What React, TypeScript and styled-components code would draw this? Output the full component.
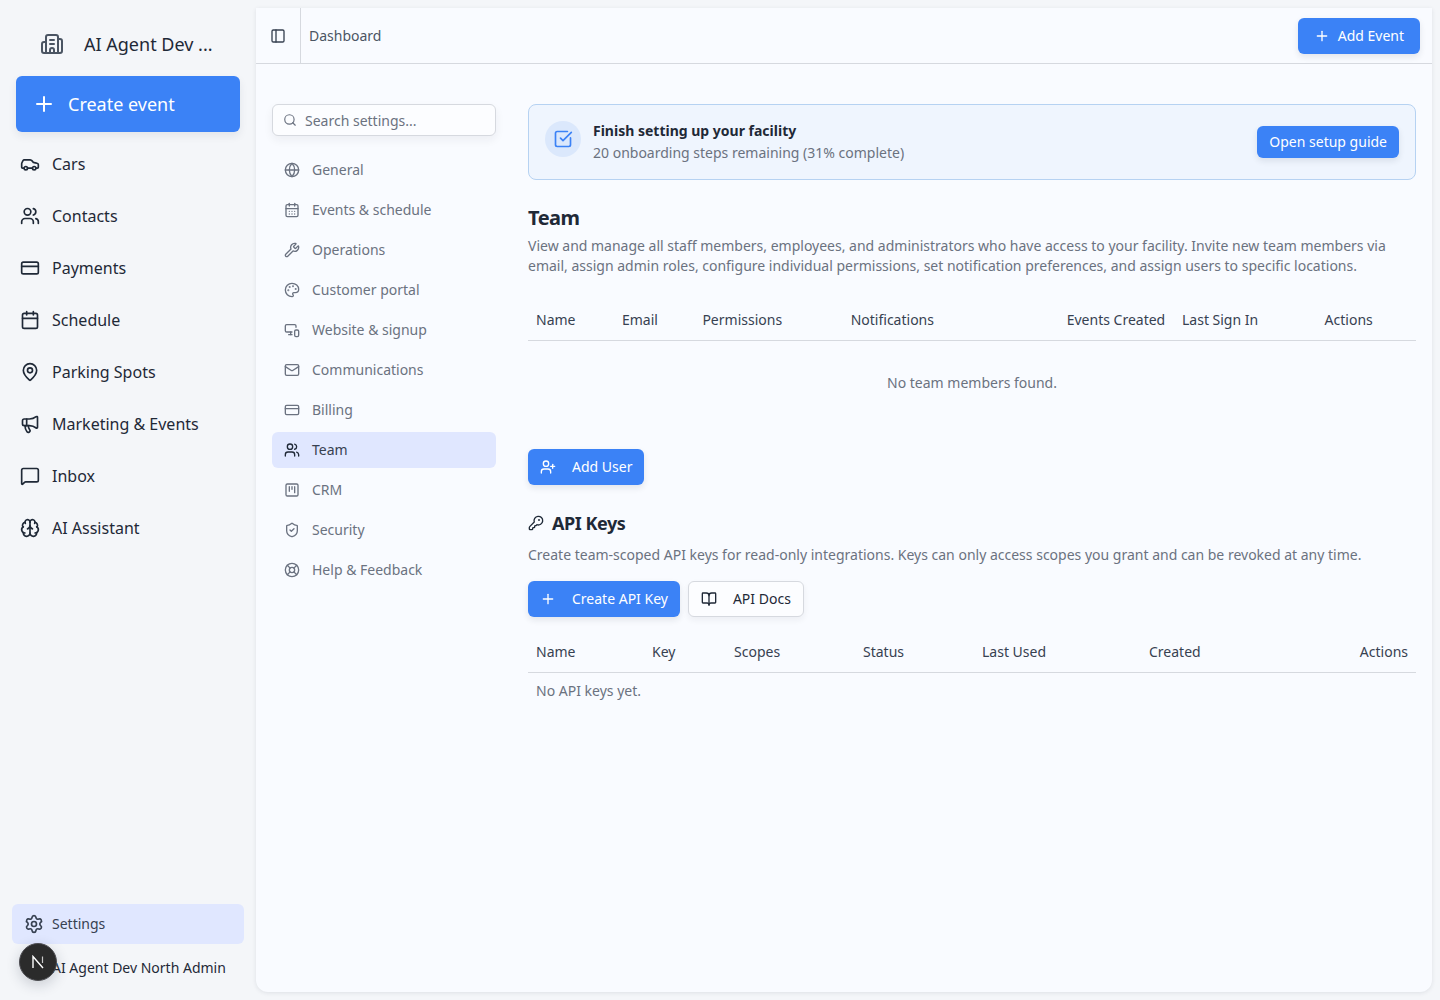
import React from "react";
import styled, { createGlobalStyle } from "styled-components";
import {
  Building2, Plus, Car, Users, CreditCard, Calendar, MapPin, Megaphone, MessageSquare, Brain,
  Settings, PanelLeft, Search, Globe, CalendarDays, Wrench, Palette, MonitorSmartphone, Mail,
  SquareKanban, ShieldCheck, LifeBuoy, SquareCheckBig, UserPlus, KeyRound, BookOpen,
} from "lucide-react";

const Global = createGlobalStyle`
  html, body { margin: 0; padding: 0; background: #f4f6f9; }
  body { font-family: "Noto Sans", "Open Sans", sans-serif; color: #1f2937; }
  * { box-sizing: border-box; }
`;

const Shell = styled.div`
  display: flex;
  width: 1440px;
  height: 1000px;
  overflow: hidden;
  background: #f4f6f9;
`;

const Sidebar = styled.aside`
  width: 256px;
  flex: none;
  display: flex;
  flex-direction: column;
  height: 100%;
`;

const Brand = styled.div`
  height: 76px;
  padding: 12px 0 0 40px;
  display: flex;
  align-items: center;
  gap: 20px;
  font-size: 18px;
  color: #1f2937;
  svg { color: #4b5563; }
`;

const CreateButton = styled.button`
  margin: 0 16px 6px;
  height: 56px;
  width: 224px;
  flex: none;
  border: 0;
  border-radius: 6px;
  background: #3b82f6;
  color: #fff;
  font: 400 18px "Noto Sans", sans-serif;
  display: flex;
  align-items: center;
  gap: 12px;
  padding: 0 16px;
  box-shadow: 0 4px 8px rgba(30, 41, 59, 0.08);
`;

const NavList = styled.nav`
  display: flex;
  flex-direction: column;
`;

const NavItem = styled.div`
  height: 52px;
  display: flex;
  align-items: center;
  gap: 12px;
  padding-left: 20px;
  font-size: 16px;
  color: #1f2937;
  svg { flex: none; }
`;

const SidebarFoot = styled.div`
  margin-top: auto;
  position: relative;
  padding: 0 12px 8px;
`;

const SettingsLink = styled.div`
  height: 40px;
  border-radius: 6px;
  background: #e0e7ff;
  display: flex;
  align-items: center;
  gap: 8px;
  padding-left: 12px;
  font-size: 14px;
  line-height: 20px;
  color: #374151;
`;

const UserName = styled.div`
  height: 48px;
  padding-left: 40px;
  display: flex;
  align-items: center;
  font-size: 14px;
  line-height: 20px;
  color: #1f2937;
  white-space: nowrap;
`;

const Avatar = styled.div`
  position: absolute;
  left: 19px;
  bottom: 19px;
  width: 38px;
  height: 38px;
  border-radius: 50%;
  background: #2b2b2b;
  border: 1.5px solid #4d4d52;
  display: flex;
  align-items: center;
  justify-content: center;
  box-shadow: 0 4px 14px rgba(30, 41, 59, 0.2);
`;

const Main = styled.main`
  width: 1176px;
  height: 984px;
  margin-top: 8px;
  flex: none;
  background: #f9fbff;
  border-radius: 0 0 12px 12px;
  box-shadow: 0 1px 4px rgba(30, 41, 59, 0.1);
  display: flex;
  flex-direction: column;
`;

const Header = styled.header`
  height: 56px;
  flex: none;
  border-bottom: 1px solid #d6d9df;
  display: flex;
  align-items: center;
`;

const Trigger = styled.div`
  width: 45px;
  height: 100%;
  border-right: 1px solid #d6d9df;
  display: flex;
  align-items: center;
  justify-content: center;
  color: #374151;
`;

const Crumb = styled.div`
  margin-left: 8px;
  font-size: 14px;
  color: #4b5563;
`;

const PrimaryButton = styled.button<{ $gap?: number; $px?: number }>`
  height: 36px;
  border: 0;
  border-radius: 6px;
  background: #3b82f6;
  color: #fff;
  font: 400 14px/20px "Noto Sans", sans-serif;
  display: inline-flex;
  align-items: center;
  gap: ${(p) => p.$gap ?? 16}px;
  padding: 0 ${(p) => p.$px ?? 12}px;
  box-shadow: 0 3px 6px rgba(30, 41, 59, 0.1);
  white-space: nowrap;
`;

const HeaderAction = styled(PrimaryButton)`
  margin-left: auto;
  margin-right: 12px;
  padding: 0 16px;
`;

const Body = styled.div`
  display: flex;
  padding: 40px 16px 0;
`;

const SettingsNav = styled.div`
  width: 224px;
  flex: none;
  display: flex;
  flex-direction: column;
  gap: 4px;
`;

const SearchBox = styled.div`
  height: 32px;
  margin-bottom: 12px;
  border: 1px solid #d6d9df;
  border-radius: 6px;
  background: #fcfdff;
  box-shadow: 0 4px 10px rgba(30, 41, 59, 0.06);
  display: flex;
  align-items: center;
  gap: 8px;
  padding-left: 10px;
  font-size: 14px;
  color: #6b7280;
  svg { color: #6b7280; }
`;

const SettingsItem = styled.div<{ $active?: boolean }>`
  height: 36px;
  border-radius: 6px;
  display: flex;
  align-items: center;
  gap: 12px;
  padding-left: 12px;
  font-size: 14px;
  line-height: 20px;
  color: ${(p) => (p.$active ? "#374151" : "#6b7280")};
  background: ${(p) => (p.$active ? "#e0e7ff" : "transparent")};
  svg { color: ${(p) => (p.$active ? "#1f2937" : "#6b7280")}; flex: none; }
`;

const Content = styled.div`
  width: 888px;
  margin-left: 32px;
  flex: none;
`;

const Banner = styled.div`
  height: 76px;
  border: 1px solid #b6d2f2;
  border-radius: 8px;
  background: #eff5fe;
  display: flex;
  align-items: center;
  padding: 0 16px;
`;

const BannerBadge = styled.div`
  width: 36px;
  height: 36px;
  border-radius: 50%;
  background: #dbe8fc;
  color: #3b82f6;
  display: flex;
  align-items: center;
  justify-content: center;
  flex: none;
  margin-right: 12px;
  align-self: flex-start;
  margin-top: 16px;
`;

const BannerText = styled.div`
  flex: 1;
`;

const BannerTitle = styled.div`
  font-size: 14px;
  line-height: 20px;
  font-weight: 700;
  color: #1f2937;
`;

const BannerSub = styled.div`
  margin-top: 2px;
  font-size: 14px;
  line-height: 20px;
  color: #6b7280;
`;

const GuideButton = styled(PrimaryButton)`
  height: 32px;
  padding: 0 12px;
`;

const TeamTitle = styled.h2`
  margin: 24px 0 0;
  font-size: 20px;
  line-height: 28px;
  font-weight: 700;
  letter-spacing: -0.5px;
  color: #1f2937;
`;

const Description = styled.p<{ $mt?: number }>`
  margin: ${(p) => p.$mt ?? 4}px 0 0;
  font-size: 14px;
  line-height: 20px;
  color: #6b7280;
`;

const TeamTableGap = styled.div`
  height: 24px;
`;

const TableHead = styled.div<{ $cols: string }>`
  display: grid;
  grid-template-columns: ${(p) => p.$cols};
  height: 41px;
  padding-bottom: 1px;
  align-items: center;
  border-bottom: 1px solid #d6d9df;
  font-size: 14px;
  line-height: 20px;
  color: #374151;
`;

const HeadCell = styled.div<{ $right?: boolean }>`
  padding: 0 8px;
  text-align: ${(p) => (p.$right ? "right" : "left")};
  white-space: nowrap;
`;

const EmptyRow = styled.div`
  height: 84px;
  margin-bottom: 24px;
  display: flex;
  align-items: center;
  justify-content: center;
  font-size: 14px;
  line-height: 20px;
  color: #6b7280;
`;

const PlainEmpty = styled.div`
  height: 36px;
  padding-left: 8px;
  display: flex;
  align-items: center;
  font-size: 14px;
  line-height: 20px;
  color: #6b7280;
`;

const KeysTitle = styled.h3`
  margin: 24px 0 0;
  display: flex;
  align-items: center;
  gap: 8px;
  font-size: 18px;
  line-height: 28px;
  font-weight: 700;
  letter-spacing: -0.45px;
  color: #1f2937;
`;

const ButtonRow = styled.div`
  display: flex;
  gap: 8px;
  margin: 16px 0 15px;
`;

const OutlineButton = styled.button`
  height: 36px;
  border: 1px solid #d6d9df;
  border-radius: 6px;
  background: #fcfdff;
  color: #1f2937;
  font: 400 14px/20px "Noto Sans", sans-serif;
  display: inline-flex;
  align-items: center;
  gap: 16px;
  padding: 0 12px;
  box-shadow: 0 3px 6px rgba(30, 41, 59, 0.06);
`;

const navItems = [
  [Car, "Cars"], [Users, "Contacts"], [CreditCard, "Payments"], [Calendar, "Schedule"],
  [MapPin, "Parking Spots"], [Megaphone, "Marketing & Events"], [MessageSquare, "Inbox"], [Brain, "AI Assistant"],
] as const;

const settingsItems = [
  [Globe, "General"], [CalendarDays, "Events & schedule"], [Wrench, "Operations"], [Palette, "Customer portal"],
  [MonitorSmartphone, "Website & signup"], [Mail, "Communications"], [CreditCard, "Billing"], [Users, "Team"],
  [SquareKanban, "CRM"], [ShieldCheck, "Security"], [LifeBuoy, "Help & Feedback"],
] as const;

const teamCols = "86px 80.4px 148.3px 216px 115.3px 142.6px 99.4px";
const teamHeads = ["Name", "Email", "Permissions", "Notifications", "Events Created", "Last Sign In", "Actions"];
const keyCols = "116px 82px 129px 119px 167px 1fr 100px";
const keyHeads = ["Name", "Key", "Scopes", "Status", "Last Used", "Created"];

function NextMark() {
  return (
    <svg width="14" height="14" viewBox="0 0 14 14" fill="none" aria-hidden="true">
      <path d="M2 13V1.5L12 13" stroke="#fff" strokeWidth="1.4" />
      <path d="M11.5 1.5V8" stroke="#c9c9c9" strokeWidth="1.2" />
    </svg>
  );
}

export default function App() {
  return (
    <Shell>
      <Global />
      <Sidebar>
        <Brand>
          <Building2 size={24} strokeWidth={2} />
          <span>AI Agent Dev ...</span>
        </Brand>
        <CreateButton>
          <Plus size={24} />
          Create event
        </CreateButton>
        <NavList>
          {navItems.map(([Icon, label]) => (
            <NavItem key={label}>
              <Icon size={20} strokeWidth={2} />
              {label}
            </NavItem>
          ))}
        </NavList>
        <SidebarFoot>
          <SettingsLink>
            <Settings size={20} />
            Settings
          </SettingsLink>
          <UserName>AI Agent Dev North Admin</UserName>
          <Avatar>
            <NextMark />
          </Avatar>
        </SidebarFoot>
      </Sidebar>
      <Main>
        <Header>
          <Trigger>
            <PanelLeft size={16} />
          </Trigger>
          <Crumb>Dashboard</Crumb>
          <HeaderAction $gap={8}>
            <Plus size={16} />
            Add Event
          </HeaderAction>
        </Header>
        <Body>
          <SettingsNav>
            <SearchBox>
              <Search size={14} />
              Search settings...
            </SearchBox>
            {settingsItems.map(([Icon, label]) => (
              <SettingsItem key={label} $active={label === "Team"}>
                <Icon size={16} />
                {label}
              </SettingsItem>
            ))}
          </SettingsNav>
          <Content>
            <Banner>
              <BannerBadge>
                <SquareCheckBig size={20} />
              </BannerBadge>
              <BannerText>
                <BannerTitle>Finish setting up your facility</BannerTitle>
                <BannerSub>20 onboarding steps remaining (31% complete)</BannerSub>
              </BannerText>
              <GuideButton>Open setup guide</GuideButton>
            </Banner>
            <TeamTitle>Team</TeamTitle>
            <Description>
              View and manage all staff members, employees, and administrators who have access to your facility. Invite
              new team members via email, assign admin roles, configure individual permissions, set notification
              preferences, and assign users to specific locations.
            </Description>
            <TeamTableGap />
            <TableHead $cols={teamCols}>
              {teamHeads.map((h) => (
                <HeadCell key={h}>{h}</HeadCell>
              ))}
            </TableHead>
            <EmptyRow>No team members found.</EmptyRow>
            <PrimaryButton>
              <UserPlus size={16} />
              Add User
            </PrimaryButton>
            <KeysTitle>
              <KeyRound size={16} />
              API Keys
            </KeysTitle>
            <Description $mt={8}>
              Create team-scoped API keys for read-only integrations. Keys can only access scopes you grant and can be
              revoked at any time.
            </Description>
            <ButtonRow>
              <PrimaryButton>
                <Plus size={16} />
                Create API Key
              </PrimaryButton>
              <OutlineButton>
                <BookOpen size={16} />
                API Docs
              </OutlineButton>
            </ButtonRow>
            <TableHead $cols={keyCols}>
              {keyHeads.map((h) => (
                <HeadCell key={h}>{h}</HeadCell>
              ))}
              <HeadCell $right>Actions</HeadCell>
            </TableHead>
            <PlainEmpty>No API keys yet.</PlainEmpty>
          </Content>
        </Body>
      </Main>
    </Shell>
  );
}
